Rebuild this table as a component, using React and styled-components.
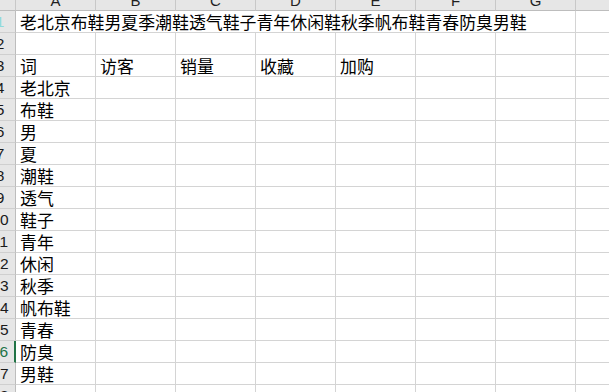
import React from 'react';
import styled, { createGlobalStyle } from 'styled-components';

const GlobalStyle = createGlobalStyle`
  html, body {
    margin: 0;
    padding: 0;
    background: #ffffff;
    overflow: hidden;
  }
`;

const Viewport = styled.div`
  width: 609px;
  height: 392px;
  overflow: hidden;
`;

const Sheet = styled.div`
  display: grid;
  grid-template-columns: 31px repeat(8, 80px);
  grid-template-rows: 21px repeat(18, 22px);
  margin: -10px 0 0 -15px;
  width: max-content;
`;

const ColHead = styled.div`
  box-sizing: border-box;
  background: #e6e6e6;
  border-right: 1px solid #c8c8c8;
  border-bottom: 1px solid #bdbdbd;
  display: flex;
  align-items: center;
  justify-content: center;
  font-family: "Liberation Sans", Arial, sans-serif;
  font-size: 15px;
  color: #1f1f1f;
`;

const RowHead = styled.div`
  box-sizing: border-box;
  background: #e6e6e6;
  border-right: ${({ $active }) => ($active ? '2px solid #217346' : '1px solid #bdbdbd')};
  border-bottom: 1px solid #cfcfcf;
  display: flex;
  align-items: center;
  justify-content: center;
  font-family: "Liberation Sans", Arial, sans-serif;
  font-size: 15.5px;
  color: ${({ $active, $tint }) => ($active ? '#217346' : $tint ? '#8fdada' : '#1a1a1a')};
`;

const Cell = styled.div`
  box-sizing: border-box;
  grid-column: ${({ $span }) => ($span ? `span ${$span}` : 'auto')};
  border-right: 1px solid #d4d4d4;
  border-bottom: 1px solid #d4d4d4;
  padding-left: 4px;
  font-family: "Noto Sans CJK SC", "Noto Sans", sans-serif;
  font-size: 16.9px;
  line-height: 21px;
  color: #000000;
  white-space: nowrap;
  overflow: hidden;
`;

const columns = ['A', 'B', 'C', 'D', 'E', 'F', 'G', 'H'];

const words = ['老北京', '布鞋', '男', '夏', '潮鞋', '透气', '鞋子', '青年', '休闲', '秋季', '帆布鞋', '青春', '防臭', '男鞋'];

const rows = [
  ['词', '访客', '销量', '收藏', '加购'],
  ...words.map((w) => [w]),
];

export default function App() {
  return (
    <Viewport>
      <GlobalStyle />
      <Sheet>
        <ColHead />
        {columns.map((c) => (
          <ColHead key={c}>{c}</ColHead>
        ))}

        <RowHead $tint>1</RowHead>
        <Cell $span={7}>老北京布鞋男夏季潮鞋透气鞋子青年休闲鞋秋季帆布鞋青春防臭男鞋</Cell>
        <Cell />

        <RowHead>2</RowHead>
        {columns.map((c) => (
          <Cell key={c} />
        ))}

        {rows.map((r, i) => {
          const n = i + 3;
          return (
            <React.Fragment key={n}>
              <RowHead $active={n === 16}>{n}</RowHead>
              {columns.map((c, j) => (
                <Cell key={c}>{r[j] || ''}</Cell>
              ))}
            </React.Fragment>
          );
        })}

        <RowHead>18</RowHead>
        {columns.map((c) => (
          <Cell key={c} />
        ))}
      </Sheet>
    </Viewport>
  );
}
